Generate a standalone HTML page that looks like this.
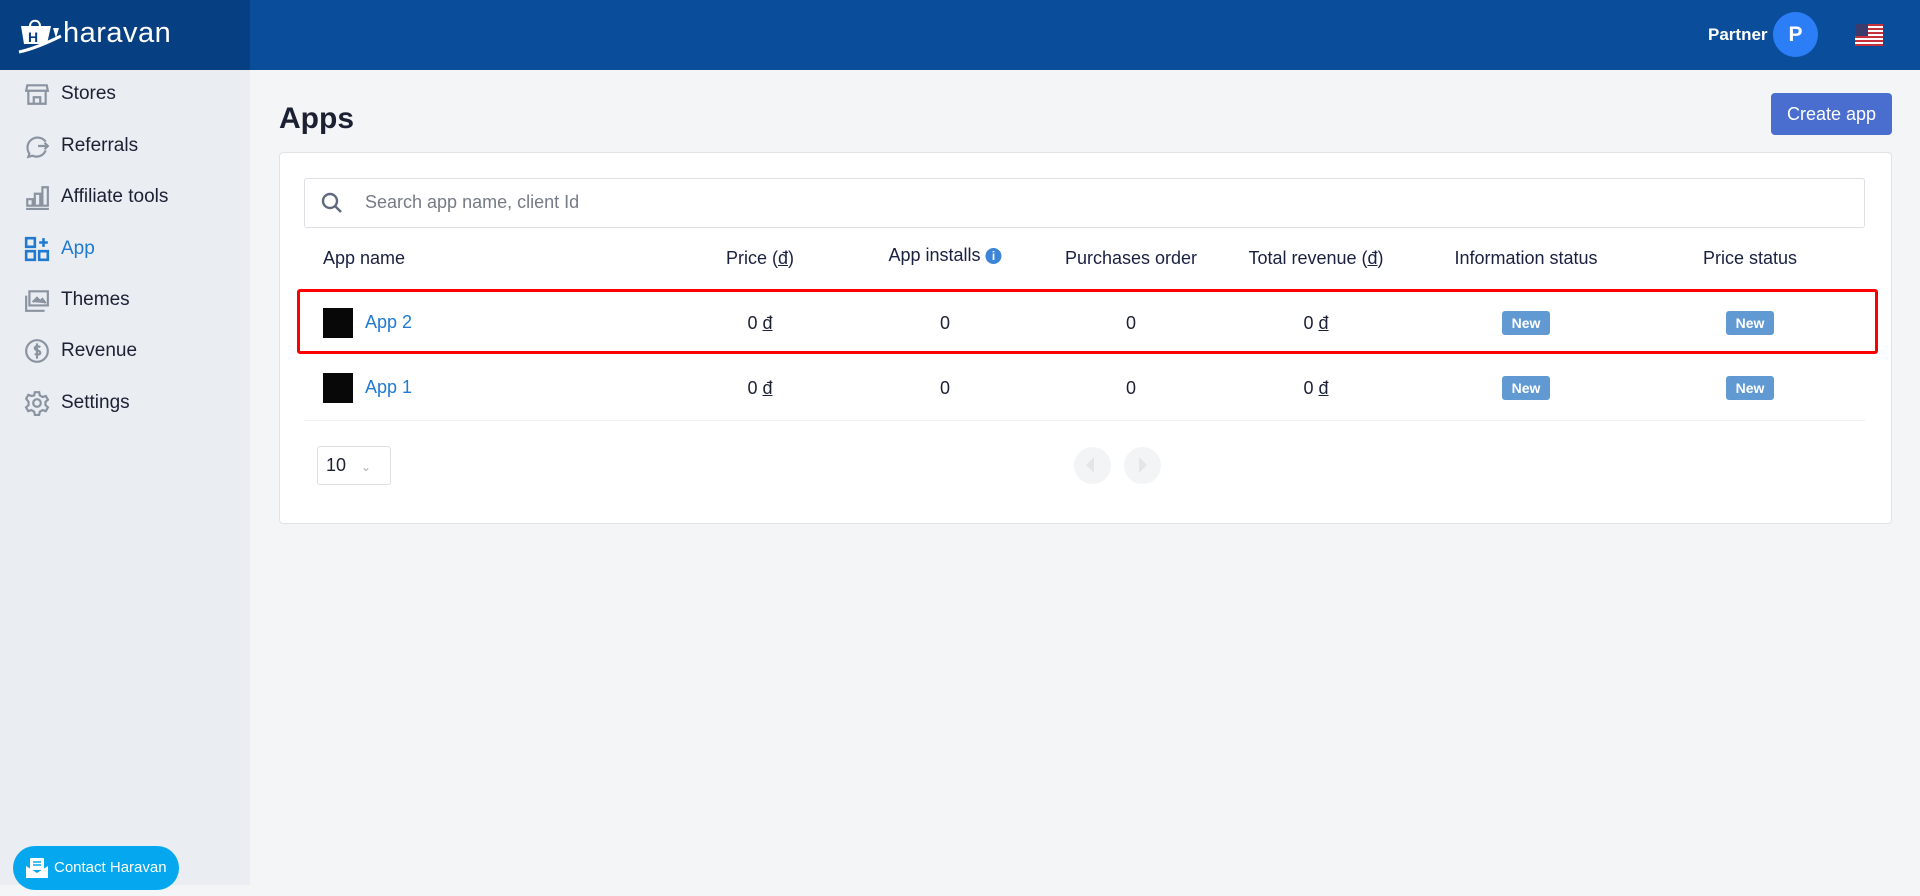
<!DOCTYPE html>
<html><head><meta charset="utf-8"><style>
*{box-sizing:border-box;margin:0;padding:0}
body{width:1920px;height:896px;background:#f4f5f7;font-family:"Liberation Sans",sans-serif;position:relative;overflow:hidden;color:#1c2033}
.hdr{position:absolute;left:0;top:0;width:1920px;height:70px;background:#0a4d9b}
.logo{position:absolute;left:0;top:0;width:250px;height:70px;background:#063f82}
.side{position:absolute;left:0;top:70px;width:250px;height:815px;background:#eaedf2}
.nav{position:absolute;left:24px;height:30px;display:flex;align-items:center;font-size:19px;color:#1c2033}
.nav svg{width:26px;height:26px;margin-right:11px}
.card{position:absolute;left:279px;top:152px;width:1613px;height:372px;background:#fff;border:1px solid #e1e3e6;border-radius:4px}
.th,.td{position:absolute;font-size:18px;transform:translateX(-50%);white-space:nowrap}
.th{top:248px;color:#1a2040}
.badge{position:absolute;width:48px;height:24px;background:#6199d2;border-radius:3px;color:#fff;font-size:14px;font-weight:bold;text-align:center;line-height:24px;transform:translateX(-50%)}
.thumb{position:absolute;left:323px;width:30px;height:30px;background:#080808}
.lnk{position:absolute;left:365px;font-size:18px;color:#1f7ad0}
u{text-decoration:underline}
</style></head><body>
<div class="hdr"></div>
<div class="logo">
<svg style="position:absolute;left:17px;top:16px" width="46" height="40" viewBox="0 0 46 40"><path d="M4 10h30l-4 18H7z" fill="#fff"/><path d="M13 10c0-7 10-7 10 0" stroke="#fff" stroke-width="2" fill="none"/><text x="11" y="26" font-size="14" font-weight="bold" fill="#063f82" font-family="Liberation Sans">H</text><path d="M36 12h6l-3 10z" fill="#fff"/><path d="M2 36c14-3 28-9 42-16" stroke="#fff" stroke-width="3" fill="none"/></svg>
<div style="position:absolute;left:63px;top:17px;font-size:29px;color:#fff;letter-spacing:0.5px">haravan</div>
</div>
<div style="position:absolute;left:1708px;top:25px;font-size:17px;font-weight:bold;color:#fff">Partner</div>
<div style="position:absolute;left:1773px;top:12px;width:45px;height:45px;border-radius:50%;background:#2b7ef5;color:#fff;font-weight:bold;font-size:21px;text-align:center;line-height:45px">P</div>
<svg style="position:absolute;left:1855px;top:24px" width="28" height="22" viewBox="0 0 28 22"><rect width="28" height="22" fill="#fff"/><g fill="#c6303a"><rect y="0" width="28" height="2"/><rect y="4" width="28" height="2"/><rect y="8" width="28" height="2"/><rect y="12" width="28" height="2"/><rect y="16" width="28" height="2"/><rect y="20" width="28" height="2"/></g><rect width="13" height="12" fill="#3c3b6e"/></svg>
<div class="side"></div>
<div class="nav" style="top:79px"><svg viewBox="0 0 24 24" fill="none" stroke="#8a93a0" stroke-width="2"><path d="M3 4h18l1 5H2z"/><path d="M4 9v12h16V9M9 21v-6h6v6"/></svg>Stores</div>
<div class="nav" style="top:131px"><svg viewBox="0 0 24 24" fill="none" stroke="#8a93a0" stroke-width="2"><path d="M20 8A9 9 0 1 0 5 19l-1 3 4-1a9 9 0 0 0 12-5"/><path d="M13 12h9M19 9l3 3-3 3"/></svg>Referrals</div>
<div class="nav" style="top:182px"><svg viewBox="0 0 24 24" fill="none" stroke="#8a93a0" stroke-width="2"><path d="M2 23h21M3 14h5v6H3zM10 9h5v11h-5zM17 3h5v17h-5z"/></svg>Affiliate tools</div>
<div class="nav" style="top:234px;color:#1f7ad0"><svg viewBox="0 0 24 24" fill="none" stroke="#1f7ad0" stroke-width="2.4"><path d="M2 2h8v8H2zM2 14h8v8H2zM14 14h8v8h-8zM18 2v8M14 6h8"/></svg>App</div>
<div class="nav" style="top:285px"><svg viewBox="0 0 24 24" fill="none" stroke="#8a93a0" stroke-width="2"><path d="M5 4h17v13H5z"/><path d="M2 8v14h17"/><path d="M8 14l4-4 3 3 2-2 3 4" fill="#8a93a0"/></svg>Themes</div>
<div class="nav" style="top:336px"><svg viewBox="0 0 24 24" fill="none" stroke="#8a93a0" stroke-width="2"><circle cx="12" cy="12" r="10"/><path d="M15 8.5c-1-1-5-1.5-5 1s5 1.5 5 4-4 2-5 1M12 5v14"/></svg>Revenue</div>
<div class="nav" style="top:388px"><svg viewBox="0 0 24 24" fill="none" stroke="#8a93a0" stroke-width="2"><circle cx="12" cy="12" r="3.5"/><path d="M10 2h4l.6 3 2.6 1.5 2.9-1 2 3.5-2.3 2v3l2.3 2-2 3.5-2.9-1-2.6 1.5-.6 3h-4l-.6-3-2.6-1.5-2.9 1-2-3.5 2.3-2v-3L2 8l2-3.5 2.9 1L9.4 5z"/></svg>Settings</div>
<div style="position:absolute;left:13px;top:846px;width:166px;height:44px;border-radius:22px;background:#05a8ef;color:#fff;font-size:15px;line-height:44px;padding-left:41px">Contact Haravan
<svg style="position:absolute;left:13px;top:12px" width="22" height="20" viewBox="0 0 22 20"><path d="M0 8l11 7 11-7v12H0z" fill="#fff"/><rect x="4" y="0" width="14" height="12" rx="1" fill="#fff"/><path d="M7 4h8M7 7h8" stroke="#05a8ef" stroke-width="1.5"/></svg></div>
<div style="position:absolute;left:279px;top:102px;font-size:30px;font-weight:bold;color:#1c2033">Apps</div>
<div style="position:absolute;left:1771px;top:93px;width:121px;height:42px;background:#4a6dd0;border-radius:4px;color:#fff;font-size:18px;text-align:center;line-height:42px">Create app</div>
<div class="card"></div>
<div style="position:absolute;left:304px;top:178px;width:1561px;height:50px;border:1px solid #dcdfe3;border-radius:3px"></div>
<svg style="position:absolute;left:320px;top:191px" width="24" height="24" viewBox="0 0 24 24" fill="none" stroke="#5f6a7d" stroke-width="2.4"><circle cx="10" cy="10" r="7"/><path d="M15 15l6 6"/></svg>
<div style="position:absolute;left:365px;top:192px;font-size:18px;color:#757b86">Search app name, client Id</div>
<div class="th" style="left:323px;transform:none">App name</div>
<div class="th" style="left:760px">Price (<u>đ</u>)</div>
<div class="th" style="left:945px;top:245px">App installs <span style="display:inline-block;width:16px;height:16px;border-radius:50%;background:#3d85d8;color:#fff;font-size:12px;text-align:center;line-height:16px;font-weight:bold;vertical-align:1px">i</span></div>
<div class="th" style="left:1131px">Purchases order</div>
<div class="th" style="left:1316px">Total revenue (<u>đ</u>)</div>
<div class="th" style="left:1526px">Information status</div>
<div class="th" style="left:1750px">Price status</div>
<div style="position:absolute;left:297px;top:289px;width:1581px;height:65px;border:3px solid #f00;border-radius:3px"></div>
<div class="thumb" style="top:308px"></div><div class="lnk" style="top:312px">App 2</div>
<div class="td" style="left:760px;top:313px">0 <u>đ</u></div><div class="td" style="left:945px;top:313px">0</div><div class="td" style="left:1131px;top:313px">0</div><div class="td" style="left:1316px;top:313px">0 <u>đ</u></div>
<div class="badge" style="left:1526px;top:311px">New</div><div class="badge" style="left:1750px;top:311px">New</div>
<div class="thumb" style="top:373px"></div><div class="lnk" style="top:377px">App 1</div>
<div class="td" style="left:760px;top:378px">0 <u>đ</u></div><div class="td" style="left:945px;top:378px">0</div><div class="td" style="left:1131px;top:378px">0</div><div class="td" style="left:1316px;top:378px">0 <u>đ</u></div>
<div class="badge" style="left:1526px;top:376px">New</div><div class="badge" style="left:1750px;top:376px">New</div>
<div style="position:absolute;left:304px;top:420px;width:1561px;height:1px;background:#eceef1"></div>
<div style="position:absolute;left:317px;top:446px;width:74px;height:39px;border:1px solid #dcdfe3;border-radius:3px;font-size:18px;line-height:37px;padding-left:8px">10 <span style="color:#aaa;font-size:12px;margin-left:10px">&#8964;</span></div>
<div style="position:absolute;left:1074px;top:447px;width:37px;height:37px;border-radius:50%;background:#f3f4f5"></div>
<div style="position:absolute;left:1124px;top:447px;width:37px;height:37px;border-radius:50%;background:#f3f4f5"></div>
<div style="position:absolute;left:1086px;top:457px;width:0;height:0;border-top:8px solid transparent;border-bottom:8px solid transparent;border-right:8px solid #e4e5e7"></div>
<div style="position:absolute;left:1139px;top:457px;width:0;height:0;border-top:8px solid transparent;border-bottom:8px solid transparent;border-left:8px solid #e4e5e7"></div>
</body></html>
